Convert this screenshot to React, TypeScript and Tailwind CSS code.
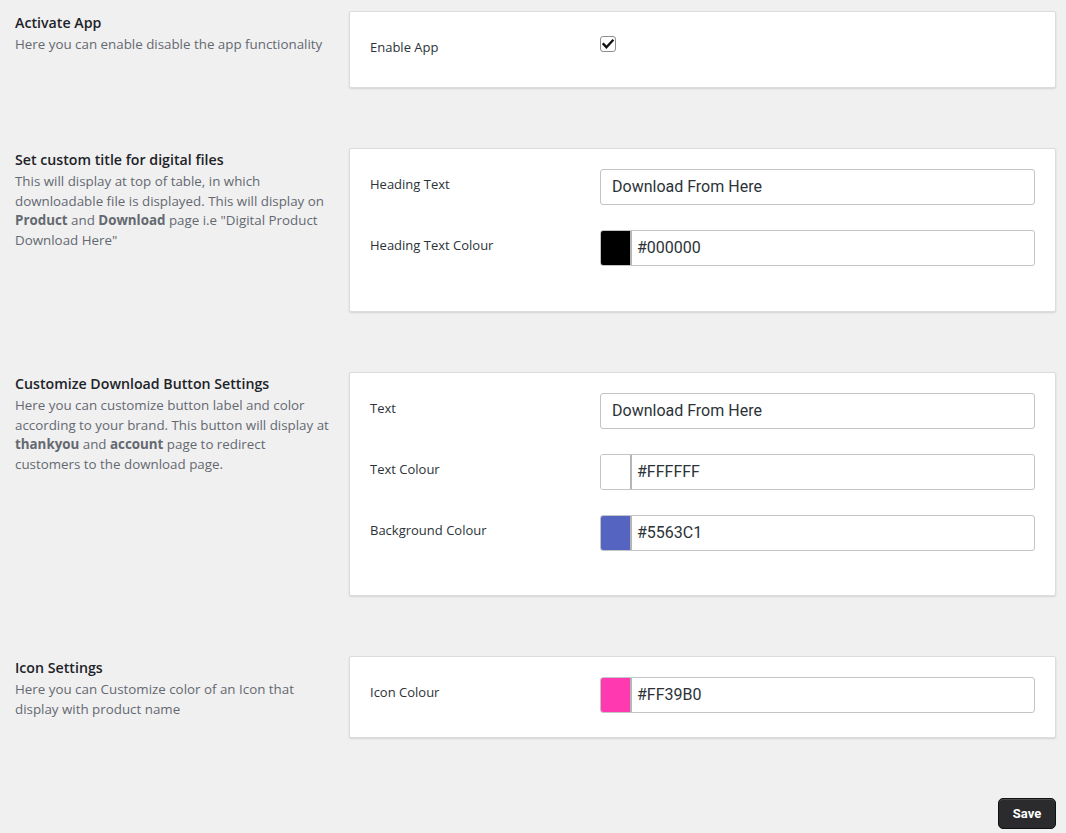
import React from "react";

const sans = { fontFamily: '"Segoe UI", "Open Sans", "Noto Sans", sans-serif' };

function Section({ title, desc, children }: { title: string; desc: React.ReactNode; children: React.ReactNode }) {
  return (
    <div className="flex items-start mb-[60px]">
      <div className="w-[334px] shrink-0 pl-[15px] pr-[2px] pt-[3px]">
        <h2 className="text-[14.2px] font-semibold text-[#1d2327] leading-[18px] mb-[3px]">{title}</h2>
        <p className="text-[13.35px] text-[#646970] leading-[19.6px]">{desc}</p>
      </div>
      <div className="flex-1 mr-[10px] ml-[15px] bg-white border border-[#dcdcde] rounded-[2px] shadow-[0_1px_2px_rgba(0,0,0,0.12)]">
        {children}
      </div>
    </div>
  );
}

function Row({ label, children, mb = "mb-[25px]" }: { label: string; children: React.ReactNode; mb?: string }) {
  return (
    <div className={`flex items-start h-[36px] ${mb}`}>
      <div className="w-[250px] shrink-0 pl-[20px] pt-[5px] text-[13px] leading-[20px] text-[#2c3338]">{label}</div>
      <div className="flex-1 mr-[20px]">{children}</div>
    </div>
  );
}

function TextInput({ value }: { value: string }) {
  return (
    <div className="h-[36px] border border-[#c3c4c7] rounded-[3px] bg-white flex items-center pl-[11px] text-[16px] text-[#2c3338]" style={{ fontFamily: 'Roboto, "Liberation Sans", sans-serif' }}>
      {value}
    </div>
  );
}

function ColorInput({ color, value }: { color: string; value: string }) {
  return (
    <div className="h-[36px] border border-[#c3c4c7] rounded-[3px] bg-white flex items-stretch overflow-hidden">
      <div className="w-[31px] border-r-2 border-[#b5b5b5]" style={{ backgroundColor: color }} />
      <div className="flex items-center pl-[5px] text-[16px] text-[#2c3338]" style={{ fontFamily: 'Roboto, "Liberation Sans", sans-serif' }}>
        {value}
      </div>
    </div>
  );
}

export default function App() {
  return (
    <div className="min-h-[833px] bg-[#f0f0f1] pt-[11px]" style={sans}>
      <Section title="Activate App" desc="Here you can enable disable the app functionality">
        <div className="flex h-[75px] pt-[18px]">
          <div className="w-[250px] shrink-0 pl-[20px] text-[13px] leading-[20px] text-[#2c3338] pt-[7px]">Enable App</div>
          <div className="pt-[6px]">
            <div className="w-[16px] h-[16px] border border-[#8c8f94] rounded-[3px] bg-white flex items-center justify-center">
              <svg width="12" height="12" viewBox="0 0 12 12">
                <path d="M1.5 6.2 L4.4 9.2 L10.6 2.6" fill="none" stroke="#111" strokeWidth="2.4" strokeLinecap="square" />
              </svg>
            </div>
          </div>
        </div>
      </Section>

      <Section
        title="Set custom title for digital files"
        desc={
          <>
            This will display at top of table, in which downloadable file is displayed. This will display on{" "}
            <b className="font-bold">Product</b> and <b className="font-bold">Download</b> page i.e "Digital Product Download Here"
          </>
        }
      >
        <div className="pt-[20px] pb-[20px]">
          <Row label="Heading Text"><TextInput value="Download From Here" /></Row>
          <Row label="Heading Text Colour"><ColorInput color="#000000" value="#000000" /></Row>
        </div>
      </Section>

      <Section
        title="Customize Download Button Settings"
        desc={
          <>
            Here you can customize button label and color according to your brand. This button will display at{" "}
            <b className="font-bold">thankyou</b> and <b className="font-bold">account</b> page to redirect customers to the download page.
          </>
        }
      >
        <div className="pt-[20px] pb-[19px]">
          <Row label="Text"><TextInput value="Download From Here" /></Row>
          <Row label="Text Colour"><ColorInput color="#FFFFFF" value="#FFFFFF" /></Row>
          <Row label="Background Colour"><ColorInput color="#5563C1" value="#5563C1" /></Row>
        </div>
      </Section>

      <Section title="Icon Settings" desc="Here you can Customize color of an Icon that display with product name">
        <div className="pt-[20px]">
          <Row label="Icon Colour" mb="mb-[24px]"><ColorInput color="#FF39B0" value="#FF39B0" /></Row>
        </div>
      </Section>

      <div className="flex justify-end pr-[10px]">
        <button className="w-[58px] h-[31px] rounded-[5px] bg-[#2b2b2d] text-white text-[13px] font-bold border border-[#111] shadow-[inset_0_1px_0_rgba(255,255,255,0.15)]" style={{ fontFamily: 'Roboto, "Liberation Sans", sans-serif' }}>
          Save
        </button>
      </div>
    </div>
  );
}
